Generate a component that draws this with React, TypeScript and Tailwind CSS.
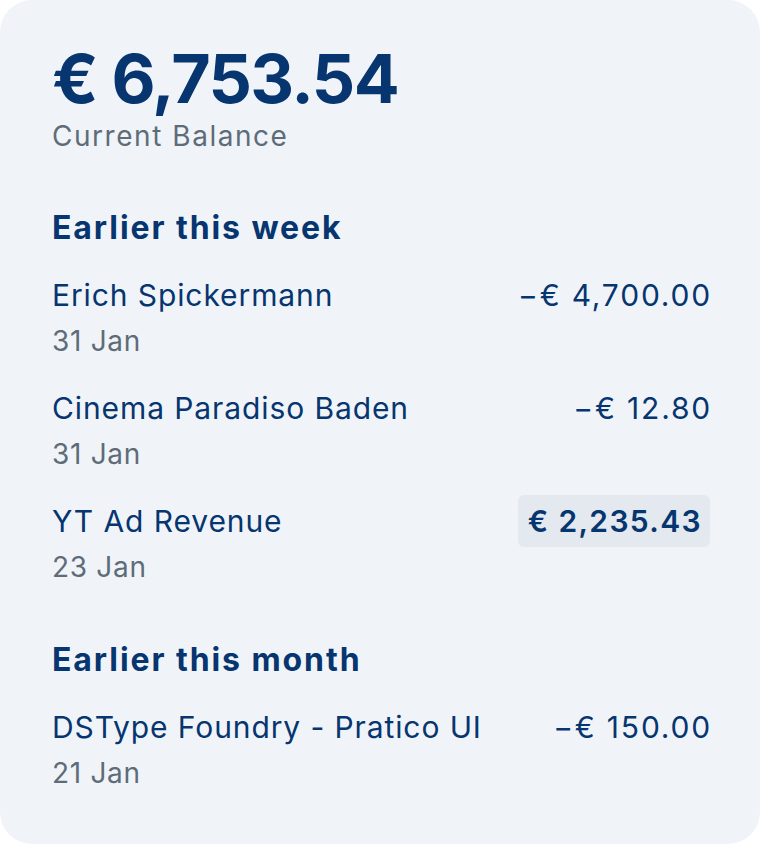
import React from 'react'

type Tx = {
  name: string
  date: string
  amount: string
  highlight?: boolean
}

const WEEK: Tx[] = [
  { name: 'Erich Spickermann', date: '31 Jan', amount: '−€ 4,700.00' },
  { name: 'Cinema Paradiso Baden', date: '31 Jan', amount: '−€ 12.80' },
  { name: 'YT Ad Revenue', date: '23 Jan', amount: '€ 2,235.43', highlight: true },
]

const MONTH: Tx[] = [
  { name: 'DSType Foundry - Pratico UI', date: '21 Jan', amount: '−€ 150.00' },
]

const Row = ({ name, date, amount, highlight }: Tx) => {
  return (
    <li className="flex flex-col">
      <div className="flex items-center justify-between h-[52px]">
        <span className="text-[30px] leading-[36px] tracking-[0.03em]">{name}</span>
        {highlight ? (
          <span className="text-[30px] font-semibold tracking-[0.045em] bg-[#e3e9ef] rounded-[6px] pl-[10px] pr-[8px] h-[52px] flex items-center">
            {amount}
          </span>
        ) : (
          <span className="text-[30px] leading-[36px] tracking-[0.06em] -mr-[2px]">{amount}</span>
        )}
      </div>
      <span className="text-[28px] text-[#5e6c79] leading-[32px] mt-[4px] tracking-[0.025em]">{date}</span>
    </li>
  )
}

const Section = ({ title, items }: { title: string; items: Tx[] }) => {
  return (
    <section className="flex flex-col">
      <h2 className="text-[32px] font-bold tracking-[0.06em] leading-[40px]">{title}</h2>
      <ul className="mt-[21px] flex flex-col gap-[25px]">
        {items.map((t) => (
          <Row key={t.name} {...t} />
        ))}
      </ul>
    </section>
  )
}

export default function App() {
  return (
    <div className="w-[760px] h-[844px] bg-white" style={{ fontFamily: 'Inter, "Noto Sans", sans-serif' }}>
      <div className="h-full rounded-[32px] bg-[#f0f4f8] pl-[52px] pr-[50px] pt-[42px] text-[#063570]">
        <div className="flex flex-col">
          <span className="text-[68px] font-bold leading-[72px] tracking-[-0.024em]">€ 6,753.54</span>
          <span className="text-[28px] text-[#5e6c79] leading-[32px] mt-[6px] tracking-[0.055em]">Current Balance</span>
        </div>
        <div className="mt-[56px] flex flex-col gap-[57px]">
          <Section title="Earlier this week" items={WEEK} />
          <Section title="Earlier this month" items={MONTH} />
        </div>
      </div>
    </div>
  )
}
